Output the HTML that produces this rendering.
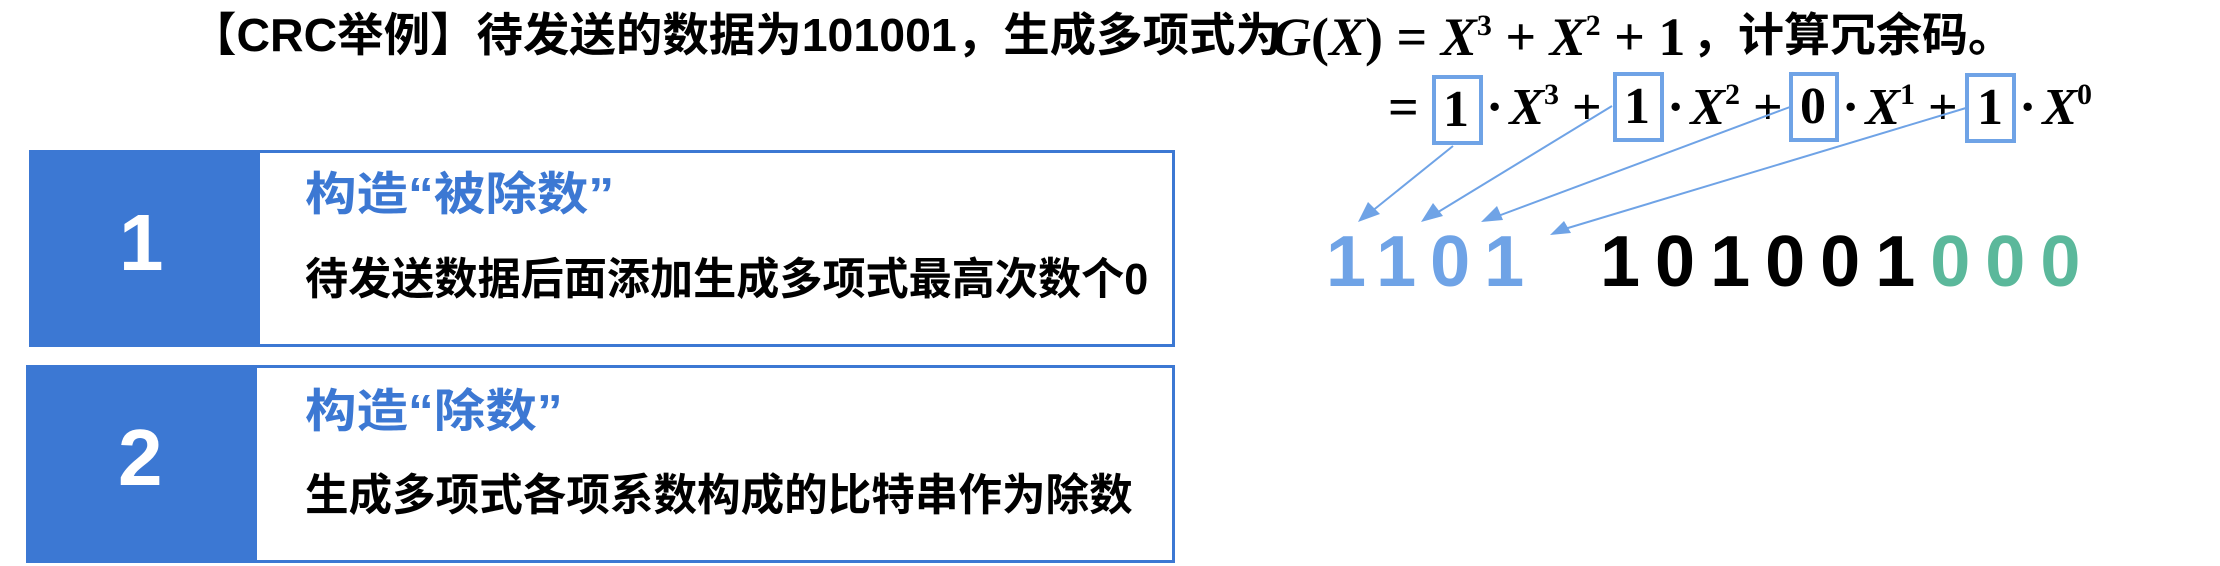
<!DOCTYPE html>
<html><head><meta charset="utf-8"><style>
*{margin:0;padding:0;box-sizing:border-box}
body{width:2220px;height:566px;background:#fff;position:relative;overflow:hidden;font-family:"Liberation Sans","Noto Sans CJK SC",sans-serif;font-weight:bold}
.a{position:absolute;white-space:nowrap;transform-origin:0 0;line-height:1}
.m{font-family:"Liberation Serif","DejaVu Serif",serif;font-weight:bold}
.i{font-style:italic}
.box{position:absolute;border:3px solid #3c78d3;background:#fff}
.pan{position:absolute;background:#3c78d3}
.num{position:absolute;color:#fff;font-size:80px;font-weight:bold;font-family:"Liberation Sans",sans-serif;line-height:1}
.hd{color:#3c78d3;font-size:46px}
.sb{color:#000;font-size:44px}
.bx{position:absolute;border:4px solid #6fa3e6}
sup{font-size:30px;vertical-align:20px}
.g{margin-left:6px}
</style></head><body>

<div class="a" style="left:190px;top:12px;font-size:46px;transform:scaleX(1.01)">【CRC举例】待发送的数据为101001，生成多项式为</div>
<div class="a m" style="left:1272px;top:10px;font-size:54px"><span class="i">G</span>(<span class="i">X</span>) = <span class="i">X</span><sup>3</sup> + <span class="i">X</span><sup>2</sup> + 1</div>
<div class="a" style="left:1692px;top:12px;font-size:46px">，计算冗余码。</div>

<div class="a m" style="left:1388px;top:80px;font-size:54px">=</div>
<div class="bx" style="left:1432px;top:75px;width:51px;height:70px"></div>
<div class="bx" style="left:1613px;top:72px;width:51px;height:70px"></div>
<div class="bx" style="left:1789px;top:72px;width:50px;height:70px"></div>
<div class="bx" style="left:1965px;top:73px;width:51px;height:70px"></div>
<div class="a m" style="left:1443px;top:84px;font-size:52px">1</div>
<div class="a m" style="left:1624px;top:81px;font-size:52px">1</div>
<div class="a m" style="left:1800px;top:81px;font-size:52px">0</div>
<div class="a m" style="left:1977px;top:82px;font-size:52px">1</div>
<div class="a m" style="left:1486px;top:80px;font-size:52px">·<span class="i g">X</span><sup>3</sup> +</div>
<div class="a m" style="left:1667px;top:80px;font-size:52px">·<span class="i g">X</span><sup>2</sup> +</div>
<div class="a m" style="left:1842px;top:80px;font-size:52px">·<span class="i g">X</span><sup>1</sup> +</div>
<div class="a m" style="left:2019px;top:80px;font-size:52px">·<span class="i g">X</span><sup>0</sup></div>

<svg style="position:absolute;left:0;top:0" width="2220" height="566">
<g stroke="#6fa3e6" stroke-width="2">
<line x1="1453" y1="146" x2="1366" y2="216"/>
<line x1="1612" y1="106" x2="1430" y2="217"/>
<line x1="1790" y1="107" x2="1490" y2="219"/>
<line x1="1966" y1="108" x2="1558" y2="231"/>
</g>
<g fill="#6fa3e6">
<polygon points="1358,222 1368,202 1380,214"/>
<polygon points="1421,222 1433,203 1443,216"/>
<polygon points="1481,222 1497,206 1503,220"/>
<polygon points="1550,235 1564,221 1571,233"/>
</g>
</svg>

<div class="a" style="left:1326px;top:226px;font-size:72px;letter-spacing:14px;color:#6fa3e6;font-family:'Liberation Sans',sans-serif">1101</div>
<div class="a" style="left:1600px;top:226px;font-size:72px;letter-spacing:15px;color:#000;font-family:'Liberation Sans',sans-serif">101001<span style="color:#5bb89b">000</span></div>

<div class="box" style="left:29px;top:150px;width:1146px;height:197px"></div>
<div class="pan" style="left:29px;top:150px;width:231px;height:197px"></div>
<div class="num" style="left:119px;top:203px">1</div>
<div class="a hd" style="left:305px;top:171px;transform:scaleX(1.12)">构造“被除数”</div>
<div class="a sb" style="left:305px;top:258px;transform:scaleX(0.98)">待发送数据后面添加生成多项式最高次数个0</div>

<div class="box" style="left:26px;top:365px;width:1149px;height:198px"></div>
<div class="pan" style="left:26px;top:365px;width:231px;height:198px"></div>
<div class="num" style="left:118px;top:418px">2</div>
<div class="a hd" style="left:305px;top:388px;transform:scaleX(1.12)">构造“除数”</div>
<div class="a sb" style="left:305px;top:474px;transform:scaleX(0.99)">生成多项式各项系数构成的比特串作为除数</div>

</body></html>
